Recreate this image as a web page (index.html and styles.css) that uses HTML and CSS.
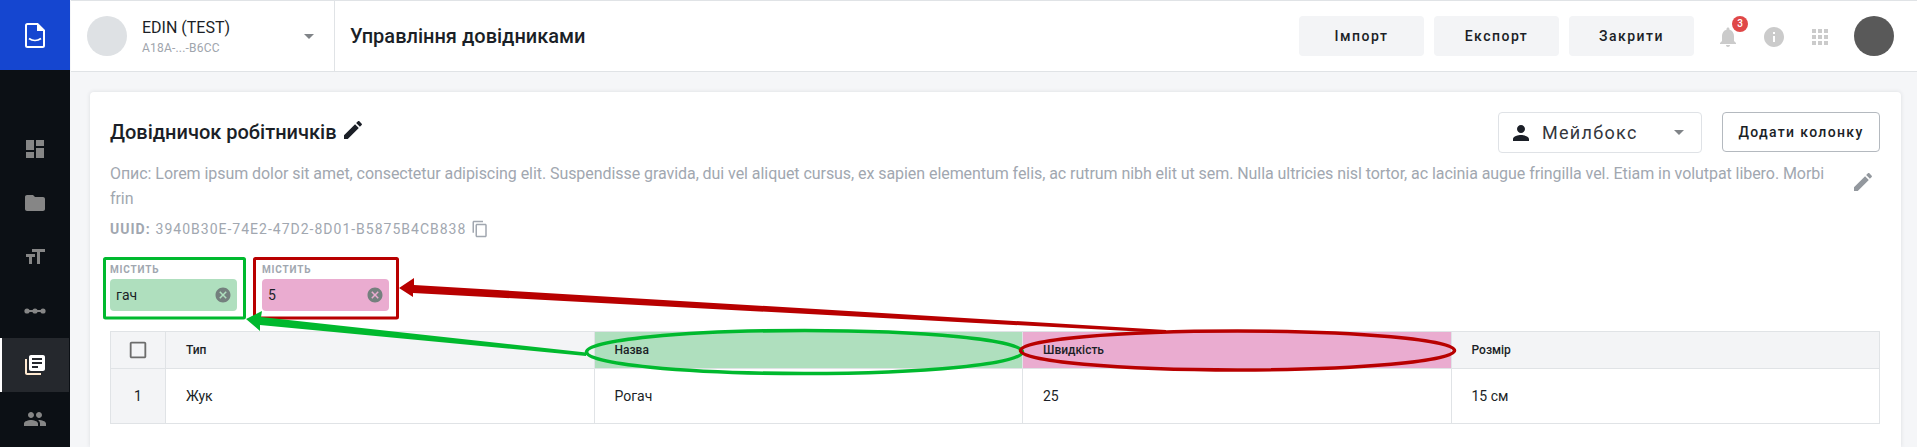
FILE: index.html
```html
<!DOCTYPE html>
<html lang="uk">
<head>
  <meta charset="utf-8">
  <title>Управління довідниками</title>
  <link rel="stylesheet" href="styles.css">
</head>
<body>
<div class="app">
  <nav class="sidebar">
    <div class="logo">
      <svg width="20" height="25" viewBox="0 0 20 25"><path d="M2.5 1h10l6.5 6.5v15a1.5 1.5 0 0 1-1.500 1.500h-15a1.500 1.500 0 0 1-1.500-1.500v-20a1.500 1.500 0 0 1 1.500-1.500z" fill="none" stroke="#fff" stroke-width="2"/><path d="M12 1l7 7h-7z" fill="#fff"/><path d="M4 15.500c3.500 2.500 8.500 2.500 12 0" fill="none" stroke="#fff" stroke-width="1.800"/></svg>
    </div>
    <div class="nav">
      <a class="nav-item"><svg class="nav-icon" viewBox="0 0 24 24"><path d="M3 13h8V3H3v10zm0 8h8v-6H3v6zm10 0h8V11h-8v10zm0-18v6h8V3h-8z"/></svg></a>
      <a class="nav-item"><svg class="nav-icon" viewBox="0 0 24 24"><path d="M10 4H4c-1.100 0-1.990.9-1.990 2L2 18c0 1.100.9 2 2 2h16c1.100 0 2-.9 2-2V8c0-1.100-.9-2-2-2h-8l-2-2z"/></svg></a>
      <a class="nav-item"><svg class="nav-icon" viewBox="0 0 24 24"><path d="M9 4v3h5v12h3V7h5V4H9zm-6 8h3v7h3v-7h3V9H3v3z"/></svg></a>
      <a class="nav-item"><svg class="nav-icon" viewBox="0 0 24 24"><circle cx="4" cy="12" r="2.600"/><circle cx="12" cy="12" r="2.600"/><circle cx="20" cy="12" r="2.600"/><path d="M4 11h16v2H4z"/></svg></a>
      <a class="nav-item active"><svg class="nav-icon" viewBox="0 0 24 24"><path fill="#ffe9d0" d="M4 6H2v14c0 1.100.9 2 2 2h14v-2H4V6z"/><path fill="#fff" d="M20 2H8c-1.100 0-2 .9-2 2v12c0 1.100.9 2 2 2h12c1.100 0 2-.9 2-2V4c0-1.100-.9-2-2-2zm-1 9H9V9h10v2zm-4 4H9v-2h6v2zm4-8H9V5h10v2z"/></svg></a>
      <a class="nav-item"><svg class="nav-icon" viewBox="0 0 24 24"><path d="M16 11c1.660 0 2.990-1.340 2.990-3S17.660 5 16 5c-1.660 0-3 1.340-3 3s1.340 3 3 3zm-8 0c1.660 0 2.990-1.340 2.990-3S9.660 5 8 5C6.340 5 5 6.340 5 8s1.340 3 3 3zm0 2c-2.330 0-7 1.170-7 3.500V19h14v-2.500c0-2.330-4.670-3.500-7-3.500zm8 0c-.29 0-.62.02-.97.05 1.160.84 1.970 1.970 1.970 3.450V19h6v-2.500c0-2.330-4.670-3.500-7-3.500z"/></svg></a>
    </div>
  </nav>

  <div class="main">
    <header class="topbar">
      <div class="org">
        <div class="org-avatar"></div>
        <div class="org-text">
          <div class="org-name">EDIN (TEST)</div>
          <div class="org-id">A18A-...-B6CC</div>
        </div>
        <span class="caret"></span>
      </div>
      <div class="page-title">Управління довідниками</div>
      <div class="top-actions">
        <button class="btn-grey">Імпорт</button>
        <button class="btn-grey">Експорт</button>
        <button class="btn-grey">Закрити</button>
      </div>
      <div class="top-icons">
        <span class="bell">
          <svg class="top-icon" viewBox="0 0 24 24"><path d="M12 22c1.100 0 2-.9 2-2h-4c0 1.100.89 2 2 2zm6-6v-5c0-3.070-1.640-5.640-4.500-6.320V4c0-.83-.67-1.500-1.500-1.500s-1.500.67-1.500 1.500v.68C7.630 5.360 6 7.920 6 11v5l-2 2v1h16v-1l-2-2z"/></svg>
          <span class="badge">3</span>
        </span>
        <svg class="top-icon" viewBox="0 0 24 24"><path d="M12 2C6.480 2 2 6.480 2 12s4.480 10 10 10 10-4.480 10-10S17.520 2 12 2zm1 15h-2v-6h2v6zm0-8h-2V7h2v2z"/></svg>
        <svg class="top-icon" viewBox="0 0 24 24"><path d="M4 8h4V4H4v4zm6 12h4v-4h-4v4zm-6 0h4v-4H4v4zm0-6h4v-4H4v4zm6 0h4v-4h-4v4zm6-10v4h4V4h-4zm-6 4h4V4h-4v4zm6 6h4v-4h-4v4zm0 6h4v-4h-4v4z"/></svg>
      </div>
      <div class="user-avatar"></div>
    </header>

    <section class="card">
      <div class="card-head">
        <h2 class="card-title">Довідничок робітничків
          <svg class="title-edit" viewBox="0 0 24 24"><path d="M3 17.250V21h3.750L17.810 9.940l-3.750-3.750L3 17.250zM20.710 7.040c.39-.39.39-1.020 0-1.410l-2.340-2.340c-.39-.39-1.020-.39-1.410 0l-1.830 1.830 3.750 3.750 1.830-1.830z"/></svg>
        </h2>
        <div class="select">
          <svg class="select-icon" viewBox="0 0 24 24"><path d="M12 12c2.210 0 4-1.790 4-4s-1.790-4-4-4-4 1.790-4 4 1.790 4 4 4zm0 2c-2.670 0-8 1.340-8 4v2h16v-2c0-2.660-5.330-4-8-4z"/></svg>
          <span class="select-text">Мейлбокс</span>
          <span class="caret"></span>
        </div>
        <button class="btn-outline">Додати колонку</button>
      </div>

      <div class="desc-row">
        <p class="desc">Опис: Lorem ipsum dolor sit amet, consectetur adipiscing elit. Suspendisse gravida, dui vel aliquet cursus, ex sapien elementum felis, ac rutrum nibh elit ut sem. Nulla ultricies nisl tortor, ac lacinia augue fringilla vel. Etiam in volutpat libero. Morbi frin</p>
        <svg class="desc-edit" viewBox="0 0 24 24"><path d="M3 17.250V21h3.750L17.810 9.940l-3.750-3.750L3 17.250zM20.710 7.040c.39-.39.39-1.020 0-1.410l-2.340-2.340c-.39-.39-1.020-.39-1.410 0l-1.830 1.830 3.750 3.750 1.830-1.830z"/></svg>
      </div>

      <div class="uuid">
        <b>UUID:</b> 3940B30E-74E2-47D2-8D01-B5875B4CB838
        <svg class="copy" viewBox="0 0 24 24"><path d="M16 1H4c-1.100 0-2 .9-2 2v14h2V3h12V1zm3 4H8c-1.100 0-2 .9-2 2v14c0 1.100.9 2 2 2h11c1.100 0 2-.9 2-2V7c0-1.100-.9-2-2-2zm0 16H8V7h11v14z"/></svg>
      </div>

      <div class="filters">
        <div class="filter">
          <div class="filter-label">МІСТИТЬ</div>
          <div class="chip chip-green">гач
            <svg class="chip-x" viewBox="0 0 24 24"><path d="M12 2C6.470 2 2 6.470 2 12s4.470 10 10 10 10-4.470 10-10S17.530 2 12 2zm5 13.590L15.590 17 12 13.410 8.410 17 7 15.590 10.590 12 7 8.410 8.410 7 12 10.590 15.590 7 17 8.410 13.410 12 17 15.590z"/></svg>
          </div>
        </div>
        <div class="filter">
          <div class="filter-label">МІСТИТЬ</div>
          <div class="chip chip-pink">5
            <svg class="chip-x" viewBox="0 0 24 24"><path d="M12 2C6.470 2 2 6.470 2 12s4.470 10 10 10 10-4.470 10-10S17.530 2 12 2zm5 13.590L15.590 17 12 13.410 8.410 17 7 15.590 10.590 12 7 8.410 8.410 7 12 10.590 15.590 7 17 8.410 13.410 12 17 15.590z"/></svg>
          </div>
        </div>
      </div>

      <table class="grid">
        <thead>
          <tr>
            <th class="col-num"><svg class="check" viewBox="0 0 24 24"><path d="M19 5v14H5V5h14m0-2H5c-1.100 0-2 .9-2 2v14c0 1.100.9 2 2 2h14c1.100 0 2-.9 2-2V5c0-1.100-.9-2-2-2z"/></svg></th>
            <th>Тип</th>
            <th class="th-green">Назва</th>
            <th class="th-pink">Швидкість</th>
            <th>Розмір</th>
          </tr>
        </thead>
        <tbody>
          <tr>
            <td class="col-num">1</td>
            <td>Жук</td>
            <td>Рогач</td>
            <td>25</td>
            <td>15 см</td>
          </tr>
        </tbody>
      </table>
    </section>
  </div>
</div>

<!-- annotations drawn on top of the screenshot -->
<svg class="notes" width="1917" height="447" viewBox="0 0 1917 447">
  <rect x="104.500" y="258.500" width="140" height="59.500" rx="1" fill="none" stroke="#00b92e" stroke-width="3"/>
  <rect x="254.500" y="258.500" width="143" height="59.500" rx="1" fill="none" stroke="#b80000" stroke-width="3"/>
  <ellipse cx="804.500" cy="352" rx="218" ry="21.500" fill="none" stroke="#00b92e" stroke-width="3.500"/>
  <ellipse cx="1237.500" cy="350.500" rx="217" ry="19.500" fill="none" stroke="#b80000" stroke-width="3.500"/>
  <path d="M246 319 L262 311 L261 317 L586 352.500 L586 356 L260 325 L260 331 Z" fill="#00b92e"/>
  <path d="M399 288 L414 278 L414 285 L1166 330 L1166 333 L413 293 L413 297 Z" fill="#b80000"/>
</svg>
</body>
</html>
```

FILE: styles.css
```css
* { box-sizing: border-box; }
html, body { margin: 0; height: 447px; overflow: hidden; }
body { font-family: Roboto, "Liberation Sans", sans-serif; color: #1b1f27; background: #f5f6f8; }

.app { display: flex; height: 447px; }

/* sidebar */
.sidebar { width: 70px; flex: none; background: #0c1015; }
.logo { height: 70px; background: #1546d0; display: flex; align-items: center; justify-content: center; }
.nav { padding-top: 52px; display: flex; flex-direction: column; }
.nav-item { height: 54px; display: flex; align-items: center; justify-content: center; }
.nav-item.active { background: #25282d; border-left: 2px solid #fff; margin-right: 1px; padding-right: 1px; }
.nav-icon { width: 24px; height: 24px; fill: #868686; }

/* top bar */
.main { flex: 1; min-width: 0; display: flex; flex-direction: column; padding-left: 1px; }
.topbar { height: 72px; flex: none; background: #fff; border-top: 1px solid #e0e3e6; border-bottom: 1px solid #e0e3e6; display: flex; align-items: center; padding-right: 23px; }
.org { width: 264px; height: 100%; border-right: 1px solid #e0e3e6; display: flex; align-items: center; padding-left: 16px; padding-right: 20px; }
.org-avatar { width: 40px; height: 40px; border-radius: 50%; background: #dee1e4; flex: none; }
.org-text { margin-left: 15px; flex: 1; }
.org-name { font-size: 16px; line-height: 20px; }
.org-id { font-size: 12px; line-height: 14px; letter-spacing: .2px; color: #a0a5ad; margin-top: 3px; }
.caret { width: 0; height: 0; border-left: 5px solid transparent; border-right: 5px solid transparent; border-top: 5px solid #808488; flex: none; }
.page-title { font-size: 20px; font-weight: 500; margin-left: 15px; flex: 1; }
.top-actions { display: flex; gap: 10px; }
.btn-grey { width: 125px; height: 40px; border: 0; border-radius: 4px; background: #f3f4f6; font: 500 14px Roboto, sans-serif; letter-spacing: 1.5px; color: #1b1f27; }
.top-icons { display: flex; align-items: center; gap: 22px; margin-left: 22px; padding-top: 2px; }
.top-icon { width: 24px; height: 24px; fill: #cbcbcb; display: block; }
.bell { position: relative; display: block; }
.badge { position: absolute; top: -9px; left: 16px; width: 16px; height: 16px; border-radius: 50%; background: #e04848; color: #fff; font-size: 10px; line-height: 16px; text-align: center; font-weight: 500; }
.user-avatar { width: 40px; height: 40px; border-radius: 50%; background: #595959; margin-left: 22px; flex: none; }

/* card */
.card { margin: 20px 16px 0 19px; flex: 1; background: #fff; border-radius: 4px 4px 0 0; box-shadow: 0 0 4px rgba(30, 40, 60, .12); padding: 20px 21px 0 20px; }
.card-head { display: flex; align-items: flex-start; }
.card-title { margin: 0; flex: 1; font-size: 20px; font-weight: 500; line-height: 40px; display: flex; align-items: center; gap: 4px; }
.title-edit { width: 24px; height: 24px; fill: #1b1f27; margin-top: -4px; }
.select { width: 204px; height: 41px; border: 1px solid #dfe2e6; border-radius: 4px; display: flex; align-items: center; padding: 0 17px 0 10px; }
.select-icon { width: 24px; height: 24px; fill: #1b1f27; flex: none; }
.select-text { flex: 1; margin-left: 9px; font-size: 18px; letter-spacing: 1.3px; color: #33363b; }
.btn-outline { width: 158px; height: 40px; margin-left: 20px; background: #fff; border: 1px solid #b4b9bf; border-radius: 4px; font: 500 14px Roboto, sans-serif; letter-spacing: 1.350px; color: #1b1f27; }

.desc-row { display: flex; justify-content: space-between; margin-top: 8px; }
.desc { margin: 0; max-width: 1715px; font-size: 16px; line-height: 25px; letter-spacing: -.06px; color: #a1a7b0; }
.desc-edit { width: 24px; height: 24px; fill: #93989e; margin: 9px 5px 0 0; flex: none; }

.uuid { display: flex; align-items: center; gap: 5px; margin-top: 8px; height: 20px; font-size: 14px; letter-spacing: 1px; color: #a1a7b0; }
.uuid b { font-weight: 700; }
.copy { width: 18px; height: 18px; fill: #a1a7b0; }

.filters { display: flex; gap: 25px; margin-top: 24px; }
.filter { width: 127px; }
.filter-label { font-size: 10px; font-weight: 700; letter-spacing: .8px; line-height: 14px; color: #a1a7b0; }
.chip { height: 32px; margin-top: 2px; border-radius: 4px; display: flex; align-items: center; justify-content: space-between; padding: 0 5px 0 6px; font-size: 14px; }
.chip-green { background: #afdfbe; }
.chip-pink { background: #eaacd0; }
.chip-x { width: 18px; height: 18px; fill: #74807e; }

.grid { margin-top: 20px; width: 1770px; border-collapse: collapse; table-layout: fixed; font-size: 14px; }
.grid th, .grid td { border: 1px solid #e0e3e6; padding: 0 20px; text-align: left; }
.grid th { height: 37px; background: #f3f4f6; font-size: 12px; font-weight: 500; }
.grid td { height: 55px; }
.grid .col-num { width: 55px; padding: 0; text-align: center; background: #f3f4f6; }
.grid th.th-green { background: #afdfbe; }
.grid th.th-pink { background: #eaacd0; }
.check { width: 22px; height: 22px; fill: #6c6c6c; display: block; margin: 0 auto; }

.notes { position: absolute; left: 0; top: 0; pointer-events: none; }
```
